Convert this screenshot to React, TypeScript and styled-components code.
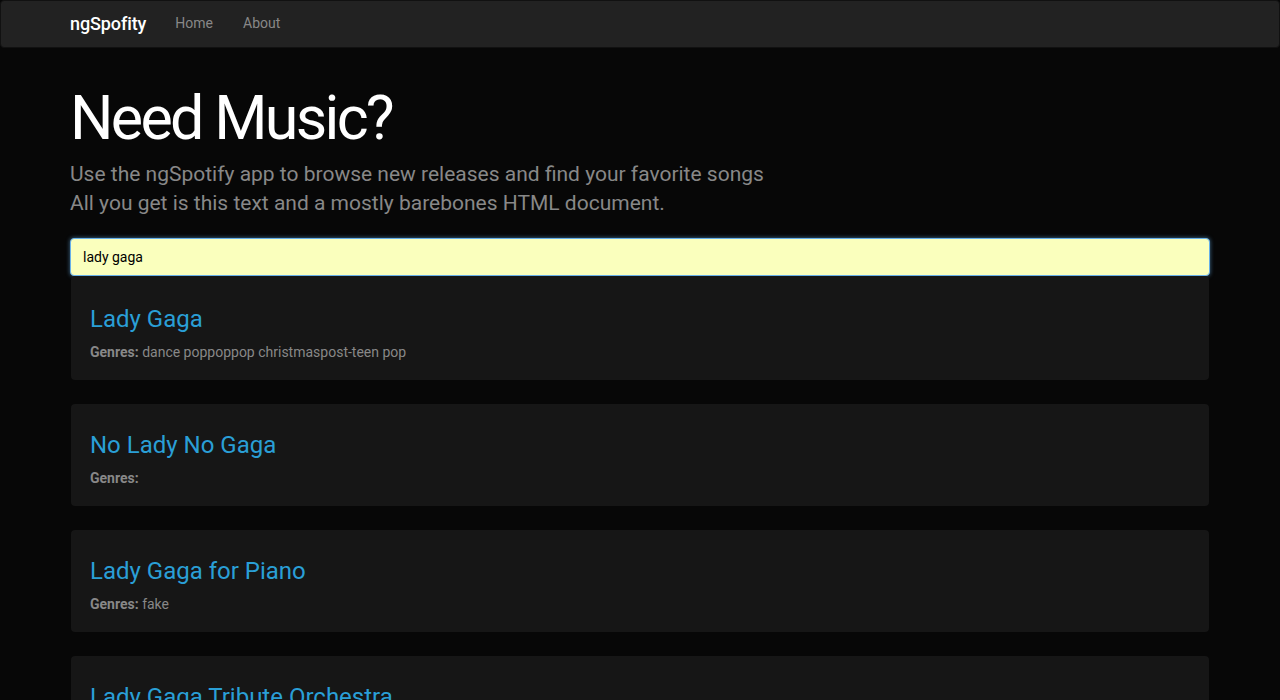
import React from "react";
import styled, { createGlobalStyle } from "styled-components";

type Artist = {
    name: string;
    genres: string;
};

const artists: Artist[] = [
    { name: "Lady Gaga", genres: "dance poppoppop christmaspost-teen pop" },
    { name: "No Lady No Gaga", genres: "" },
    { name: "Lady Gaga for Piano", genres: "fake" },
    { name: "Lady Gaga Tribute Orchestra", genres: "" },
];

const App: React.FC = () => {
    return (
        <>
            <GlobalStyle />
            <Navbar>
                <NavContainer>
                    <Brand href="#">ngSpofity</Brand>
                    <NavLink href="#">Home</NavLink>
                    <NavLink href="#">About</NavLink>
                </NavContainer>
            </Navbar>
            <Container>
                <Jumbotron>
                    <Title>Need Music?</Title>
                    <Lead>
                        Use the ngSpotify app to browse new releases and find
                        your favorite songs
                        <br />
                        All you get is this text and a mostly barebones HTML
                        document.
                    </Lead>
                </Jumbotron>
                <SearchInput type="text" defaultValue="lady gaga" />
                <Results>
                    {artists.map((artist) => (
                        <Card key={artist.name}>
                            <ArtistName href="#">{artist.name}</ArtistName>
                            <Genres>
                                <strong>Genres:</strong> {artist.genres}
                            </Genres>
                        </Card>
                    ))}
                </Results>
            </Container>
        </>
    );
};

export default App;

const GlobalStyle = createGlobalStyle`
    * {
        box-sizing: border-box;
    }
    body {
        margin: 0;
        background: #070707;
        color: #888;
        font-family: Roboto, "Liberation Sans", sans-serif;
        font-size: 14px;
        line-height: 1.428;
    }
`;

const Navbar = styled.nav`
    height: 48px;
    background: #222;
    border: 1px solid #111;
    border-radius: 4px;
`;

const NavContainer = styled.div`
    width: 1170px;
    margin: 0 auto;
    padding: 0 15px;
    display: flex;
    align-items: center;
    height: 46px;
`;

const Brand = styled.a`
    color: #fff;
    font-size: 18px;
    font-weight: 500;
    letter-spacing: -0.1px;
    text-decoration: none;
    margin-right: 14px;
`;

const NavLink = styled.a`
    color: #888;
    font-size: 14px;
    text-decoration: none;
    padding: 0 15px;
`;

const Container = styled.div`
    width: 1170px;
    margin: 0 auto;
    padding: 0 15px;
`;

const Jumbotron = styled.div`
    padding-top: 37px;
`;

const Title = styled.h1`
    margin: 0;
    color: #fff;
    font-size: 61px;
    font-weight: 400;
    line-height: 67px;
    letter-spacing: -2.7px;
`;

const Lead = styled.p`
    margin: 8px 0 20px;
    font-size: 21px;
    line-height: 29px;
    font-weight: 400;
    color: #888;
`;

const SearchInput = styled.input`
    display: block;
    width: 100%;
    height: 38px;
    padding: 6px 12px;
    font-family: Roboto, "Liberation Sans", sans-serif;
    font-size: 14px;
    color: #000;
    background: #faffbd;
    border: 1px solid #66afe9;
    border-radius: 4px;
    outline: none;
    box-shadow: 0 0 4px rgba(102, 175, 233, 0.6);
`;

const Results = styled.div`
    display: flex;
    flex-direction: column;
    gap: 24px;
`;

const Card = styled.div`
    background: #161616;
    border-radius: 4px;
    padding: 18px 19px 18px;
    margin: 0 1px;

    &:first-child {
        padding-top: 20px;
    }
`;

const ArtistName = styled.a`
    display: block;
    margin: 10px 0 10px;
    color: #2a9fd6;
    font-size: 24px;
    line-height: 26px;
    text-decoration: none;
`;

const Genres = styled.p`
    margin: 0;
    color: #888;
    font-size: 14px;
    line-height: 20px;

    strong {
        font-weight: 700;
    }
`;
